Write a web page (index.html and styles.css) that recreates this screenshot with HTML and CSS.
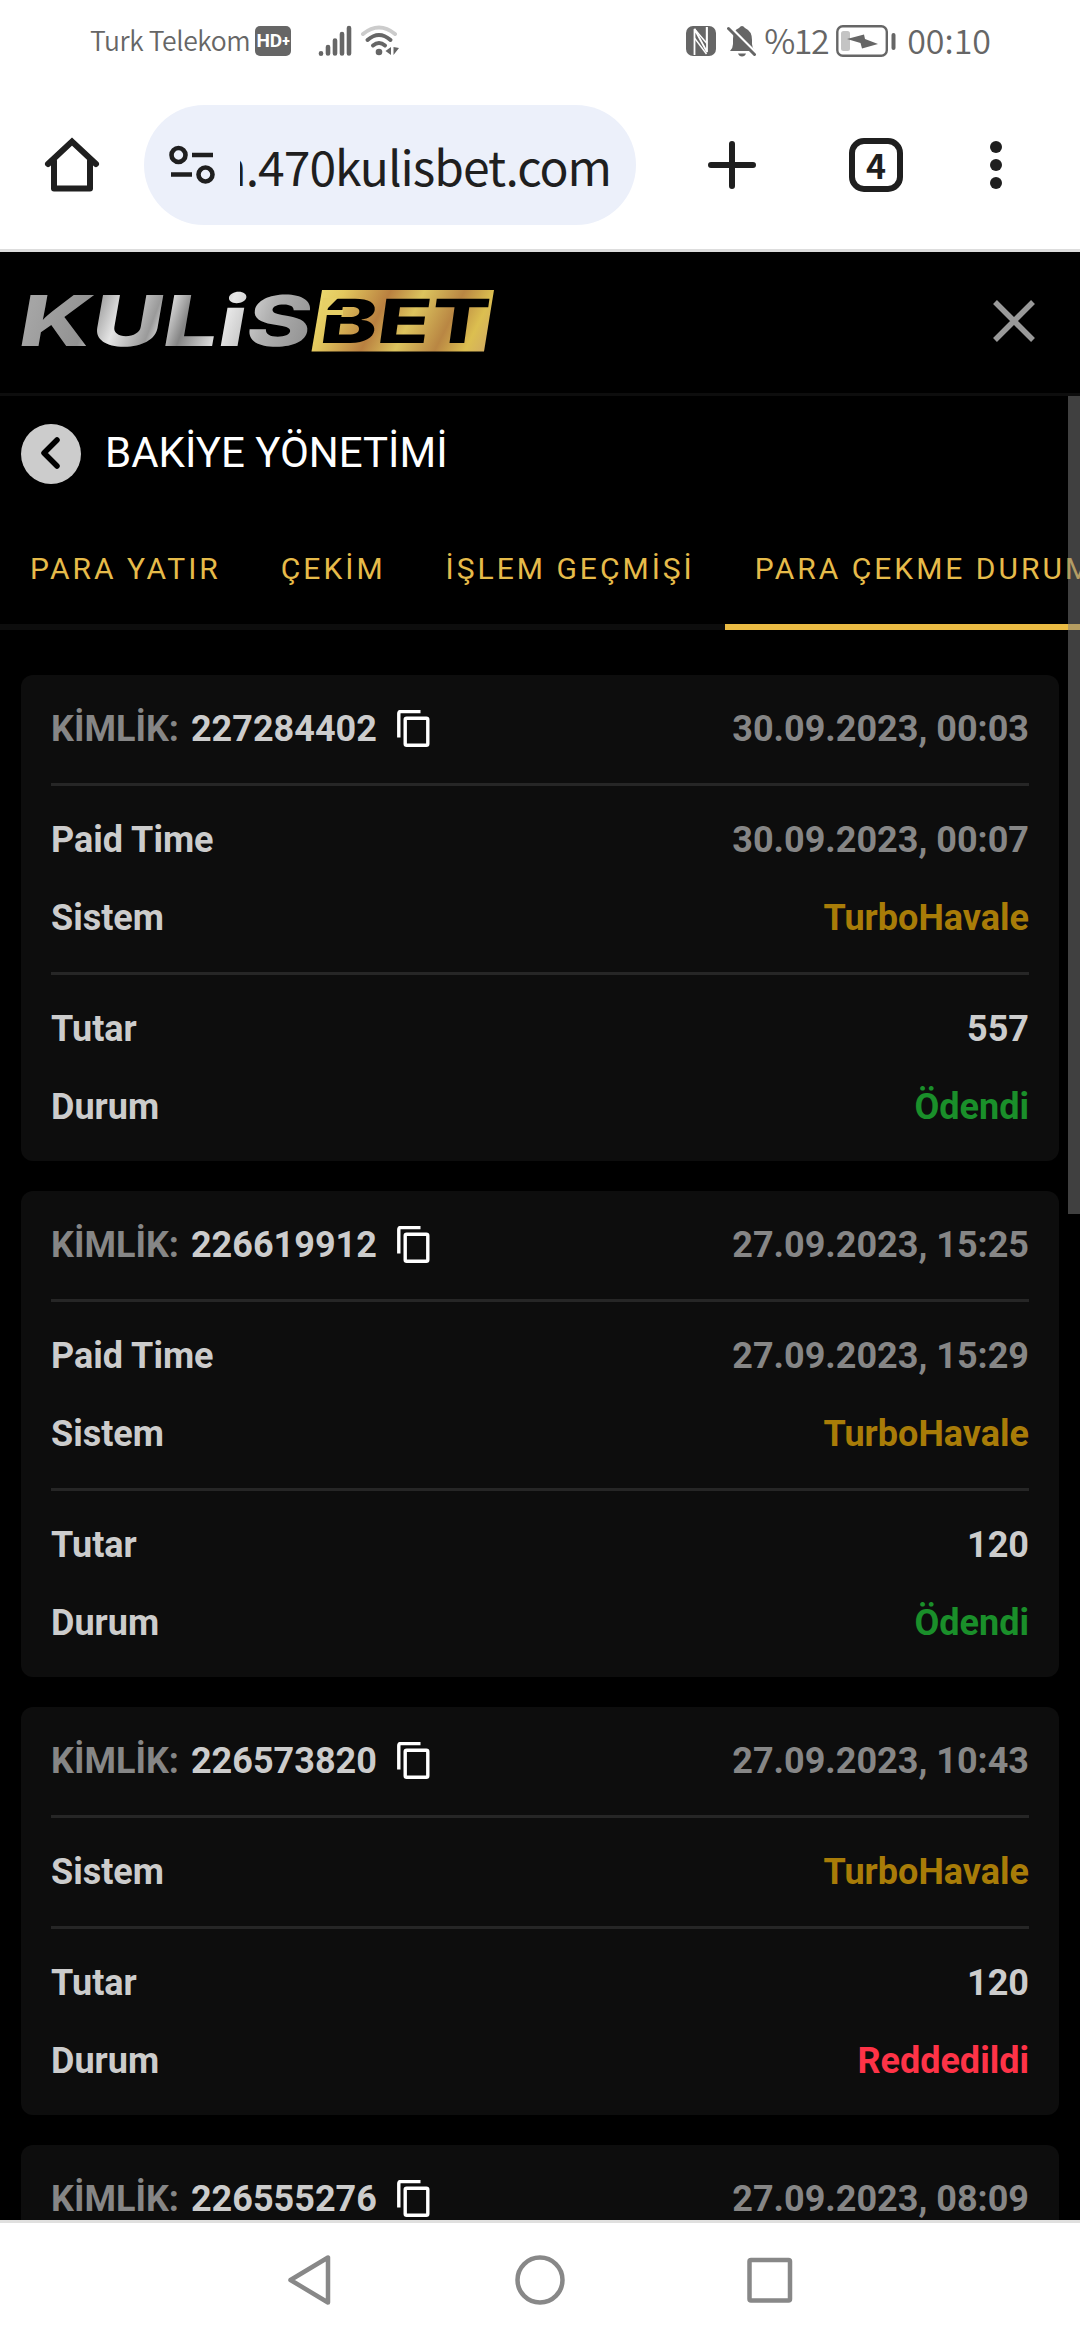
FILE: index.html
```html
<!DOCTYPE html>
<html lang="tr">
<head>
<meta charset="utf-8">
<title>Kulisbet</title>
<link rel="stylesheet" href="styles.css">
</head>
<body>
<div class="screen">
  <header class="status">
    <span class="carrier">Turk Telekom</span>
    <span class="hd">HD<b class="hd-plus">+</b></span>
    <svg class="signal" width="34" height="32" viewBox="0 0 34 32" fill="none" stroke="#666" stroke-width="4.6" stroke-linecap="round"><path d="M3 28.3v.4M10 22v6.4M17 15.5v12.900M24 9v19.400M31 3v25.400"/></svg>
    <svg class="wifi" width="40" height="34" viewBox="0 0 40 34" fill="none" stroke-width="4" stroke-linecap="round"><path d="M3 10Q19 -3 35 10" stroke="#ccc"/><path d="M7.500 16Q19 6 30.500 16M13 21.500Q19 16.500 25 21.500" stroke="#666"/><circle cx="19" cy="28" r="3.300" fill="#666"/><path d="M31 23v8l-5.500-4zM33.500 23v8l5.500-7z" fill="#666"/></svg>
    <span class="spacer"></span>
    <svg class="nfc" width="30" height="30" viewBox="0 0 30 30"><rect width="30" height="30" rx="7" fill="#666"/><path d="M8.500 29V3l12.500 23V1" fill="none" stroke="#fff" stroke-width="1.800"/><path d="M8.500 3l12 14v-16M8.500 12l12 16" fill="none" stroke="#fff" stroke-width="1.400"/></svg>
    <svg class="bell" width="30" height="32" viewBox="0 0 30 32"><path d="M3 26Q6 23 6 19v-5Q6 5 12 3Q15-1 18 3Q25 6 25 15v4q0 4 3 7z" fill="#666"/><path d="M11 28.500h8q-1 3-4 3t-4-3z" fill="#666"/><path d="M3 2l27 27" stroke="#fff" stroke-width="3"/><path d="M1.500 3.500l26 26" stroke="#666" stroke-width="3" stroke-linecap="round"/></svg>
    <span class="clock percent">%12</span>
    <svg class="battery" width="60" height="32" viewBox="0 0 60 32"><rect x="1.300" y="1.300" width="49.500" height="29.400" rx="5.500" fill="none" stroke="#666" stroke-width="2.400"/><rect x="5" y="6" width="9" height="20" rx="2.500" fill="#c4c4c4"/><path d="M11 14l17-4.500 1 4.500 13 5-16 4.500-1.500-5.500z" fill="#666"/><rect x="55.500" y="8" width="4" height="17" rx="2" fill="#666"/></svg>
    <span class="clock">00:10</span>
  </header>

  <div class="toolbar">
    <svg class="home" width="56" height="56" viewBox="0 0 56 56" fill="none" stroke="#1f1f1f" stroke-width="6" stroke-linecap="round"><path d="M4 27L28 4.500L52 27"/><path d="M10 24v27.500h36V24" stroke-linejoin="round"/></svg>
    <div class="omnibox">
      <svg class="tune" width="48" height="40" viewBox="0 0 48 40" fill="none" stroke="#1f1f1f" stroke-width="4.600"><circle cx="10.500" cy="10" r="7"/><path d="M24 10h21M3 29.500h21"/><circle cx="37.500" cy="29.500" r="7"/></svg>
      <div class="url"><span class="url-text">m.470kulisbet.com</span></div>
    </div>
    <svg class="plus" width="48" height="48" viewBox="0 0 48 48" stroke="#1f1f1f" stroke-width="6" stroke-linecap="round"><path d="M24 3v42M3 24h42"/></svg>
    <span class="tabcount">4</span>
    <svg class="dots" width="12" height="48" viewBox="0 0 12 48" fill="#1f1f1f"><circle cx="6" cy="6" r="6"/><circle cx="6" cy="24" r="6"/><circle cx="6" cy="42" r="6"/></svg>
  </div>

  <main class="site">
    <div class="brandbar">
      <svg class="logo" width="480" height="66" viewBox="0 0 480 66">
        <defs>
          <linearGradient id="silver" gradientUnits="userSpaceOnUse" x1="0" y1="0" x2="290" y2="60">
            <stop offset="0" stop-color="#a5a5a5"/><stop offset=".2" stop-color="#929292"/><stop offset=".3" stop-color="#e4e4e4"/><stop offset=".42" stop-color="#9a9a9a"/><stop offset=".46" stop-color="#d6d6d6"/><stop offset=".53" stop-color="#858585"/><stop offset=".66" stop-color="#e6e6e6"/><stop offset=".8" stop-color="#b0b0b0"/><stop offset="1" stop-color="#8b8b8b"/>
          </linearGradient>
          <linearGradient id="gold" gradientUnits="userSpaceOnUse" x1="295" y1="0" x2="455" y2="80">
            <stop offset="0" stop-color="#eddc72"/><stop offset=".15" stop-color="#e3c85e"/><stop offset=".38" stop-color="#b98040"/><stop offset=".55" stop-color="#dcc45e"/><stop offset=".75" stop-color="#b98643"/><stop offset=".9" stop-color="#dcbf50"/><stop offset="1" stop-color="#d2ad60"/>
          </linearGradient>
        </defs>
        <text class="logo-text" transform="translate(-5 58) skewX(-10)" x="0" y="0" textLength="292" lengthAdjust="spacingAndGlyphs" fill="url(#silver)">KULiS</text>
        <path d="M301 2h172l-10 61.500H290.500z" fill="url(#gold)"/>
        <text class="logo-text bet" transform="translate(297 55) skewX(-8)" x="0" y="0" textLength="168" lengthAdjust="spacingAndGlyphs" fill="#000">BET</text>
        <path d="M302 10h15l-12 12h17v5h-22z" fill="#e6cf66"/>
      </svg>
      <svg class="close" width="42" height="42" viewBox="0 0 42 42" stroke="#999" stroke-width="5.500"><path d="M2 2l38 38M40 2L2 40"/></svg>
    </div>

    <div class="title">
      <svg class="back" width="60" height="60" viewBox="0 0 60 60"><circle cx="30" cy="30" r="30" fill="#ccc"/><path d="M36 16L23 29l13 13" fill="none" stroke="#000" stroke-width="5.500" stroke-linecap="round" stroke-linejoin="round"/></svg>
      <h1 class="heading">BAKİYE YÖNETİMİ</h1>
    </div>

    <nav class="tabs">
      <span class="tab">PARA YATIR</span>
      <span class="tab">ÇEKİM</span>
      <span class="tab">İŞLEM GEÇMİŞİ</span>
      <span class="tab active">PARA ÇEKME DURUMU</span>
    </nav>

    <div class="list">
      <section class="card">
        <div class="group"><div class="row"><span class="muted">KİMLİK:</span><span class="num">227284402</span><svg class="copy" viewBox="0 0 33 37"><use href="#copy"/></svg><span class="value muted">30.09.2023, 00:03</span></div></div>
        <div class="group"><div class="row">Paid Time<span class="value muted">30.09.2023, 00:07</span></div><div class="row">Sistem<span class="value system">TurboHavale</span></div></div>
        <div class="group"><div class="row">Tutar<span class="value">557</span></div><div class="row">Durum<span class="value paid">Ödendi</span></div></div>
      </section>
      <section class="card">
        <div class="group"><div class="row"><span class="muted">KİMLİK:</span><span class="num">226619912</span><svg class="copy" viewBox="0 0 33 37"><use href="#copy"/></svg><span class="value muted">27.09.2023, 15:25</span></div></div>
        <div class="group"><div class="row">Paid Time<span class="value muted">27.09.2023, 15:29</span></div><div class="row">Sistem<span class="value system">TurboHavale</span></div></div>
        <div class="group"><div class="row">Tutar<span class="value">120</span></div><div class="row">Durum<span class="value paid">Ödendi</span></div></div>
      </section>
      <section class="card">
        <div class="group"><div class="row"><span class="muted">KİMLİK:</span><span class="num">226573820</span><svg class="copy" viewBox="0 0 33 37"><use href="#copy"/></svg><span class="value muted">27.09.2023, 10:43</span></div></div>
        <div class="group"><div class="row">Sistem<span class="value system">TurboHavale</span></div></div>
        <div class="group"><div class="row">Tutar<span class="value">120</span></div><div class="row">Durum<span class="value rejected">Reddedildi</span></div></div>
      </section>
      <section class="card">
        <div class="group"><div class="row"><span class="muted">KİMLİK:</span><span class="num">226555276</span><svg class="copy" viewBox="0 0 33 37"><use href="#copy"/></svg><span class="value muted">27.09.2023, 08:09</span></div></div>
      </section>
    </div>
    <div class="scrollbar"></div>
  </main>

  <footer class="navbar">
    <svg width="50" height="52" viewBox="0 0 50 52" fill="none" stroke="#888" stroke-width="4.500" stroke-linejoin="round"><path d="M42 3.500v45L4.500 26z"/></svg>
    <svg width="50" height="52" viewBox="0 0 50 52" fill="none" stroke="#888" stroke-width="4.500"><circle cx="25" cy="26" r="22.500"/></svg>
    <svg width="50" height="52" viewBox="0 0 50 52" fill="none" stroke="#888" stroke-width="4.500"><rect x="5.500" y="6" width="40.500" height="40.500" rx="1.500"/></svg>
  </footer>
</div>
<svg class="sprite" width="0" height="0"><symbol id="copy" viewBox="0 0 33 37"><path d="M1.800 27.500V3.500q0-2 2-2H23.500" fill="none" stroke="#fff" stroke-width="3.400"/><rect x="8.200" y="8.200" width="22.600" height="27" rx="1.500" fill="none" stroke="#fff" stroke-width="3.400"/></symbol></svg>
</body>
</html>
```
FILE: styles.css
```css
* { box-sizing: border-box; }
body { margin: 0; background: #fff; font-family: Roboto, sans-serif; }
svg { display: block; flex: none; }
.sprite { position: absolute; }
.screen { width: 1080px; height: 2340px; display: flex; flex-direction: column; overflow: hidden; }

.status { height: 81px; display: flex; align-items: center; padding: 0 89px 0 90px; color: #666; font-family: "Noto Sans CJK SC", sans-serif; flex: none; }
.carrier { font-size: 26.5px; font-weight: 350; line-height: 40px; letter-spacing: -.4px; width: 165px; white-space: nowrap; padding-bottom: 2px; }
.hd { width: 36px; height: 30px; border-radius: 5px; background: #666; color: #fff; font: 700 19px/30px Roboto, sans-serif; display: flex; justify-content: center; }
.hd-plus { font-size: 14px; }
.signal { margin-left: 27px; }
.wifi { margin-left: 8px; }
.spacer { flex: 1; }
.bell { margin-left: 11px; }
.clock { font-size: 34px; font-weight: 350; line-height: 40px; white-space: nowrap; padding-bottom: 2px; }
.percent { margin: 0 8px 0 7px; letter-spacing: -1.5px; }
.battery { margin-right: 11px; }

.toolbar { height: 171px; border-bottom: 3px solid #ddd; display: flex; align-items: center; padding: 0 78px 0 44px; flex: none; }
.omnibox { margin-left: 44px; width: 492px; height: 120px; border-radius: 60px; background: #ecf0fa; display: flex; align-items: center; padding-left: 24px; }
.url { margin-left: 24px; width: 371px; height: 80px; overflow: hidden; display: flex; justify-content: flex-end; align-items: center; }
.url-text { font: 400 48px/80px "Noto Sans CJK SC", sans-serif; letter-spacing: -1px; color: #1f1f1f; white-space: nowrap; }
.plus { margin-left: 72px; }
.tabcount { margin-left: 93px; width: 54px; height: 54px; border: 6px solid #1f1f1f; border-radius: 15px; font: 700 34px/42px "Noto Sans CJK SC", sans-serif; text-align: center; color: #1f1f1f; }
.dots { margin-left: 87px; }

.site { flex: 1; min-height: 0; background: #000; position: relative; overflow: hidden; }
.brandbar { height: 144px; border-bottom: 3px solid #0d0d0d; display: flex; align-items: center; justify-content: space-between; padding: 0 45px 3px 21px; }
.logo { overflow: visible; }
.logo-text { font: 800 70px Inter, sans-serif; }
.bet { font-size: 61px; }
.title { height: 114px; display: flex; align-items: center; gap: 24px; padding: 1px 21px 0; }
.heading { margin: 0; color: #fff; font-size: 42px; font-weight: 400; line-height: 58px; padding-bottom: 2px; }
.tabs { height: 120px; display: flex; white-space: nowrap; color: #e6bb4a; font-size: 30px; letter-spacing: 3px; line-height: 118px; }
.tab { padding: 0 30px; border-bottom: 6px solid #0d0d0d; flex: none; }
.active { border-color: #eabb43; }

.list { padding: 45px 21px 0; display: flex; flex-direction: column; gap: 30px; }
.card { background: #0d0d0d; border-radius: 12px; padding: 0 30px; color: #ccc; font-size: 36px; font-weight: 700; }
.group { padding: 15px 0; }
.group + .group { border-top: 3px solid #262626; }
.row { height: 78px; display: flex; align-items: center; white-space: nowrap; }
.num { margin-left: 12px; }
.copy { width: 33px; height: 37px; margin: 0 0 1px 20px; }
.value { margin-left: auto; }
.muted { color: #868686; }
.system { color: #a87c08; }
.paid { color: #1a8f2a; }
.rejected { color: #ff3347; }
.scrollbar { position: absolute; right: 0; top: 144px; width: 12px; height: 818px; background: rgba(128, 128, 128, .5); }

.navbar { height: 120px; border-top: 3px solid #e0e0df; background: #fff; display: flex; align-items: center; justify-content: center; gap: 179px; padding-bottom: 3px; flex: none; }
```
